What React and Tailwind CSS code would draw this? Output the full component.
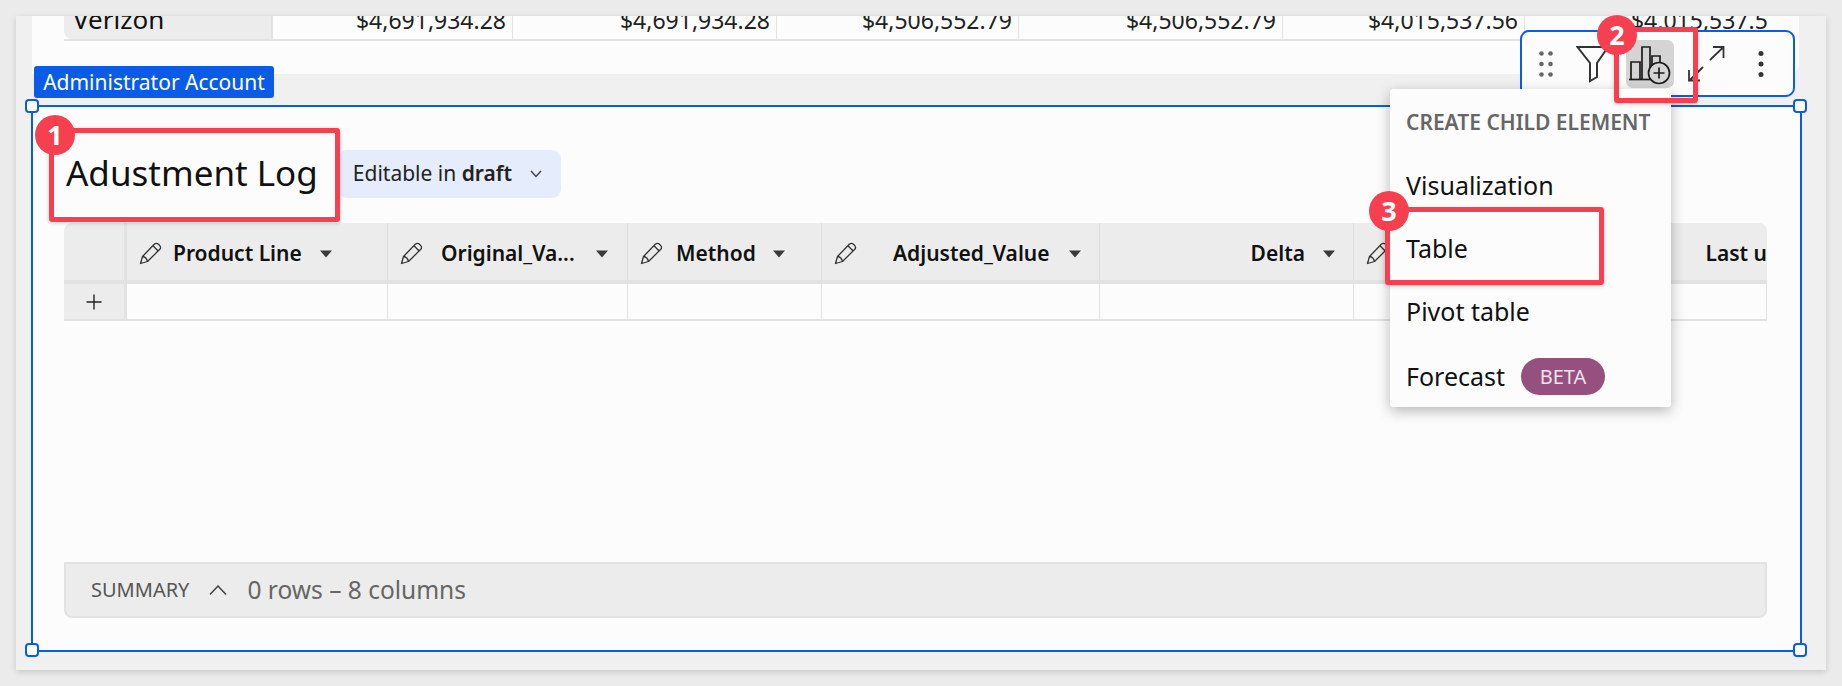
import { Plus } from "lucide-react";

const font = "font-['Noto_Sans','Open_Sans',sans-serif]";

// top table row, clipped by the page edge
const amountCells = [
  { width: "w-[240px]", value: "$4,691,934.28" },
  { width: "w-[264px]", value: "$4,691,934.28" },
  { width: "w-[242px]", value: "$4,506,552.79" },
  { width: "w-[264px]", value: "$4,506,552.79" },
  { width: "w-[242px]", value: "$4,015,537.56" },
  { width: "w-[263px]", value: "$4,015,537.56" },
];

const columns = [
  { width: "w-[261px]", label: "Product Line", edit: true, gap: "ml-[11px]", caret: "ml-[17px]", justify: "justify-start" },
  { width: "w-[240px]", label: "Original_Va...", edit: true, gap: "ml-[18px]", caret: "ml-[20px]", justify: "justify-start" },
  { width: "w-[194px]", label: "Method", edit: true, gap: "ml-[13px]", caret: "ml-[16px]", justify: "justify-start" },
  { width: "w-[278px]", label: "Adjusted_Value", edit: true, gap: "ml-[36px]", caret: "ml-[18px]", justify: "justify-start" },
  { width: "w-[254px]", label: "Delta", edit: false, gap: "", caret: "ml-[17px]", justify: "justify-end" },
];

function Pencil() {
  return (
    <svg width="23" height="23" viewBox="0 0 23 23" fill="none" stroke="#333" strokeWidth="1.3" strokeLinejoin="round" className="shrink-0">
      <path d="M1.5 21.5 L3.5 14.5 L15.5 2 Q17.5 0.5 19.5 2.2 L20.8 3.6 Q22.3 5.5 20.8 7.3 L8.5 19.5 Z" />
      <path d="M3.5 14.5 Q7.5 15 8.5 19.5 M14 3.8 L19.2 9" />
    </svg>
  );
}

function Caret() {
  return (
    <svg width="14" height="8" viewBox="0 0 14 8" className="shrink-0">
      <path d="M1 0.5 H13 L7 7.5 Z" fill="#3a3a3a" />
    </svg>
  );
}

function HeaderCell({ col }) {
  return (
    <div className={`${col.width} h-full flex items-center ${col.justify} pl-3 pr-[17px] pt-1 border-r border-[#dcdcdc] shrink-0`}>
      {col.edit && <Pencil />}
      <span className={`${col.gap} text-[21px] font-semibold text-[#111] whitespace-nowrap`}>{col.label}</span>
      <span className={col.caret}><Caret /></span>
    </div>
  );
}

function Handle({ className }) {
  return <div className={`absolute w-[14px] h-[14px] rounded-[4px] border-2 border-[#0a5ce6] bg-white ${className}`}></div>;
}

function Badge({ n, className }) {
  return (
    <div className={`absolute w-[40px] h-[40px] rounded-full bg-[#f7404f] text-white text-[27px] font-bold flex items-center justify-center ${className}`}>
      {n}
    </div>
  );
}

function RedBox({ className }) {
  return <div className={`absolute border-[5px] border-[#f7404f] rounded-[3px] shadow-[0_1px_4px_rgba(0,0,0,0.2)] ${className}`}></div>;
}

function Toolbar() {
  return (
    <div className="absolute left-[1520px] top-[30px] w-[275px] h-[67px] bg-[#fcfcfc] border-2 border-[#0a5ce6] rounded-[9px] flex items-center">
      <svg width="14" height="26" viewBox="0 0 14 26" className="ml-[17px] shrink-0" fill="#666">
        <circle cx="2.5" cy="2.5" r="2.3" />
        <circle cx="11.5" cy="2.5" r="2.3" />
        <circle cx="2.5" cy="13" r="2.3" />
        <circle cx="11.5" cy="13" r="2.3" />
        <circle cx="2.5" cy="23.5" r="2.3" />
        <circle cx="11.5" cy="23.5" r="2.3" />
      </svg>
      <svg width="34" height="38" viewBox="0 0 34 38" fill="none" stroke="#333" strokeWidth="2" className="ml-[23px] shrink-0">
        <path d="M1.5 2 H32 L21 18 V32 L14 36 V18 Z" strokeLinejoin="miter" />
      </svg>
      <div className="ml-[16px] w-[48px] h-[48px] rounded-[7px] bg-[#d4d4d4] shrink-0">
        <svg width="48" height="48" viewBox="0 0 48 48" fill="none" stroke="#1c1c1c" strokeWidth="1.7">
          <path d="M5 39 V22 H14 V39 M16 39 V7 H24 V39 M26 39 V16 H34 V26" />
          <path d="M3 39.5 H30" />
          <circle cx="33" cy="33" r="10.5" fill="#d4d4d4" />
          <path d="M27.5 33 H38.5 M33 27.5 V38.5" />
        </svg>
      </div>
      <svg width="37" height="36" viewBox="0 0 37 36" fill="none" stroke="#333" strokeWidth="1.8" className="ml-[14px] shrink-0">
        <path d="M36 0.5 L22 14 M25 1 H35.5 V12" />
        <path d="M1 35 L15 21 M1 24 V34.5 H12" />
      </svg>
      <svg width="6" height="26" viewBox="0 0 6 26" className="ml-[33px] shrink-0" fill="#333">
        <circle cx="3" cy="2.5" r="2.5" />
        <circle cx="3" cy="13" r="2.5" />
        <circle cx="3" cy="23.5" r="2.5" />
      </svg>
    </div>
  );
}

function ChildMenu() {
  return (
    <div className="absolute left-[1390px] top-[89px] w-[281px] h-[318px] bg-[#fcfcfc] rounded-[3px] shadow-[0_4px_14px_rgba(0,0,0,0.28)] pl-[16px]">
      <div className="h-[49px] flex items-end text-[21px] font-semibold text-[#666] whitespace-nowrap">CREATE CHILD ELEMENT</div>
      <div className="mt-[30px] h-[36px] flex items-center text-[25px] text-[#111]">Visualization</div>
      <div className="mt-[27px] h-[36px] flex items-center text-[25px] text-[#111]">Table</div>
      <div className="mt-[27px] h-[36px] flex items-center text-[25px] text-[#111]">Pivot table</div>
      <div className="mt-[28px] h-[37px] flex items-center text-[25px] text-[#111]">
        Forecast
        <span className="ml-[16px] w-[84px] h-[37px] rounded-full bg-[#95507f] text-[#f0e2ec] text-[20px] flex items-center justify-center">BETA</span>
      </div>
    </div>
  );
}

export default function App() {
  return (
    <div className={`relative w-[1842px] h-[686px] overflow-hidden bg-[#ebebeb] pt-4 pl-4 ${font}`}>
      <div className="w-[1810px] h-[654px] bg-[#f0f0f0] shadow-[0_2px_6px_rgba(0,0,0,0.15)]">
        {/* element above, scrolled so only its last row shows */}
        <div className="ml-4 w-[1767px] h-[58px] bg-[#fcfcfc] rounded-br-[10px] pl-8">
          <div className="w-[1703px] h-[25px] flex overflow-hidden border-b-2 border-[#e2e2e2]">
            <div className="w-[209px] h-full bg-[#ececec] border-r-2 border-[#e2e2e2] rounded-bl-[8px] pl-[9px] flex items-end shrink-0">
              <span className="text-[26px] leading-[26px] text-[#111] mb-[7px]">Verizon</span>
            </div>
            {amountCells.map((cell, i) => (
              <div key={i} className={`${cell.width} h-full flex items-end justify-end pr-[6px] border-r border-[#e2e2e2] shrink-0`}>
                <span className="text-[23px] leading-[26px] text-[#222] mb-[6px] whitespace-nowrap">{cell.value}</span>
              </div>
            ))}
          </div>
        </div>

        {/* selected element */}
        <div className="mt-[31px] ml-[15px] w-[1771px] h-[547px] border-2 border-[#0a5ce6] bg-[#fcfcfc] flex flex-col pl-[31px] pr-[33px] pb-[32px]">
          <div className="mt-[43px] h-[48px] flex items-center">
            <h1 className="pl-[2px] pb-[2px] text-[35px] font-normal text-[#111] whitespace-nowrap">Adustment Log</h1>
            <div className="ml-[20px] h-[48px] pl-[15px] pr-[19px] rounded-[9px] bg-[#e5ecfb] flex items-center text-[21px] text-[#222] whitespace-nowrap">
              Editable in&nbsp;<span className="font-semibold">draft</span>
              <svg width="12" height="8" viewBox="0 0 12 8" fill="none" stroke="#444" strokeWidth="1.5" className="ml-[18px]">
                <path d="M1 1 L6 6.5 L11 1" />
              </svg>
            </div>
          </div>

          <div className="mt-[25px] h-[98px] flex flex-col">
            <div className="h-[61px] flex bg-[#ececec] rounded-t-[8px] border-b-4 border-[#e2e2e2] overflow-hidden">
              <div className="w-[63px] h-full border-r-[3px] border-[#e2e2e2] shrink-0"></div>
              {columns.map((col) => (
                <HeaderCell key={col.label} col={col} />
              ))}
              <div className="flex-1 h-full flex items-center justify-end overflow-hidden pl-3 pt-1">
                <Pencil />
                <span className="ml-auto text-[21px] font-semibold text-[#111] whitespace-nowrap">Last u</span>
              </div>
            </div>
            <div className="h-[37px] flex border-b-2 border-[#e2e2e2]">
              <div className="w-[63px] h-full bg-[#ececec] border-r-[3px] border-[#e2e2e2] flex items-center justify-center shrink-0">
                <Plus size={24} strokeWidth={1.4} color="#222" />
              </div>
              {columns.map((col) => (
                <div key={col.label} className={`${col.width} h-full border-r border-[#e2e2e2] shrink-0`}></div>
              ))}
              <div className="flex-1 h-full border-r border-[#e2e2e2]"></div>
            </div>
          </div>

          <div className="mt-auto h-[56px] bg-[#ececec] border-2 border-[#e2e2e2] rounded-b-[8px] pl-[25px] flex items-center">
            <span className="text-[20px] text-[#555]">SUMMARY</span>
            <svg width="18" height="10" viewBox="0 0 18 10" fill="none" stroke="#444" strokeWidth="1.5" className="ml-[20px]">
              <path d="M1 9.5 L9 1 L17 9.5" />
            </svg>
            <span className="ml-[20px] text-[24.5px] text-[#666] whitespace-nowrap">0 rows – 8 columns</span>
          </div>
        </div>
      </div>

      {/* tag + handles of the selection */}
      <div className="absolute left-[34px] top-[66px] w-[240px] h-[32px] pt-px rounded-[3px] bg-[#0a5ce6] text-white text-[21px] flex items-center justify-center whitespace-nowrap">
        Administrator Account
      </div>
      <Handle className="left-[25px] top-[99px]" />
      <Handle className="left-[1793px] top-[99px]" />
      <Handle className="left-[25px] top-[643px]" />
      <Handle className="left-[1793px] top-[643px]" />

      <Toolbar />
      <ChildMenu />

      {/* tutorial callouts */}
      <RedBox className="left-[49px] top-[128px] w-[291px] h-[94px]" />
      <RedBox className="left-[1614px] top-[27px] w-[84px] h-[76px]" />
      <RedBox className="left-[1385px] top-[207px] w-[219px] h-[78px]" />
      <Badge n="1" className="left-[35px] top-[115px]" />
      <Badge n="2" className="left-[1597px] top-[15px]" />
      <Badge n="3" className="left-[1369px] top-[191px]" />
    </div>
  );
}
